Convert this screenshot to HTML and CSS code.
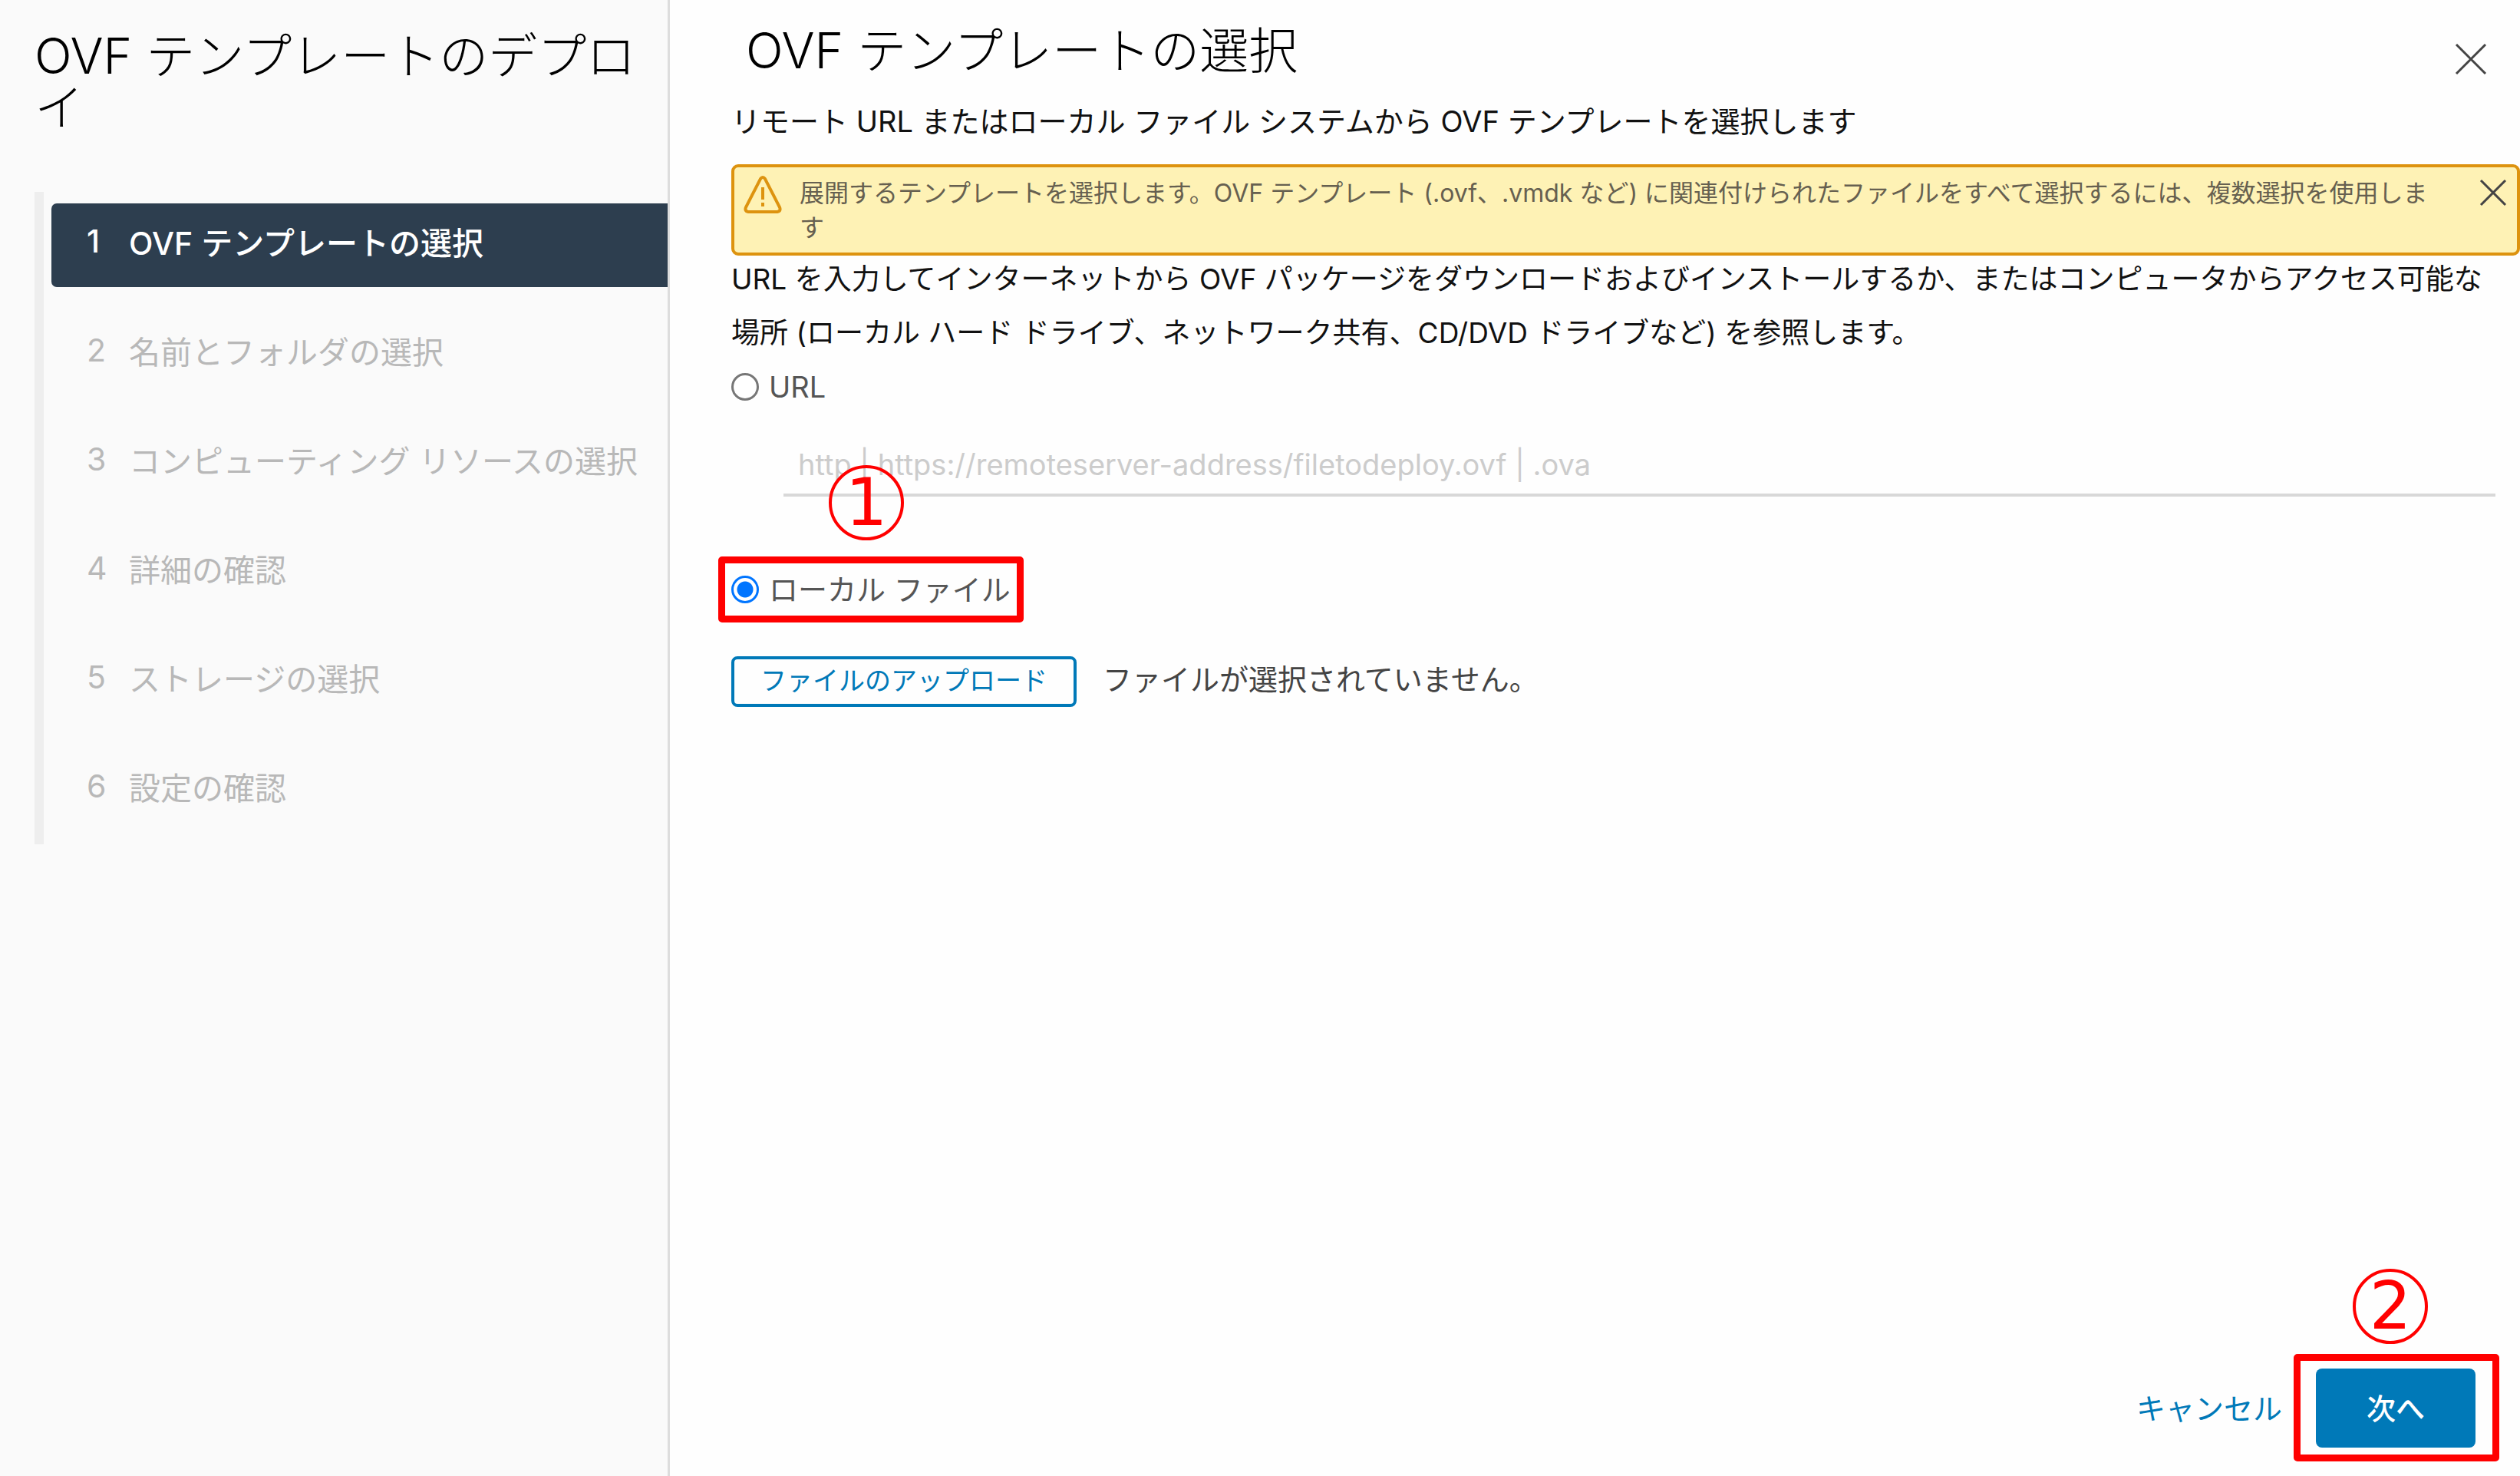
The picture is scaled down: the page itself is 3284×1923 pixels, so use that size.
FILE: index.html
```html
<!DOCTYPE html>
<html lang="ja">
<head>
  <meta charset="UTF-8">
  <title>OVF テンプレートのデプロイ</title>
  <link rel="stylesheet" href="styles.css">
</head>
<body>

  <aside class="sidebar">
    <h1>OVF テンプレートのデプロイ</h1>
    <nav>
      <ol class="steps">
        <li><button class="step active" aria-current="step"><span class="num">1</span>OVF テンプレートの選択</button></li>
        <li><button class="step" disabled><span class="num">2</span>名前とフォルダの選択</button></li>
        <li><button class="step" disabled><span class="num">3</span>コンピューティング リソースの選択</button></li>
        <li><button class="step" disabled><span class="num">4</span>詳細の確認</button></li>
        <li><button class="step" disabled><span class="num">5</span>ストレージの選択</button></li>
        <li><button class="step" disabled><span class="num">6</span>設定の確認</button></li>
      </ol>
    </nav>
  </aside>

  <main>
    <header>
      <h2>OVF テンプレートの選択</h2>
      <button class="close" aria-label="閉じる">
        <svg width="42" height="42" viewBox="0 0 42 42"><path d="M2 2 L40 40 M40 2 L2 40"/></svg>
      </button>
    </header>

    <p class="subtitle">リモート URL またはローカル ファイル システムから OVF テンプレートを選択します</p>

    <div class="alert" role="alert">
      <svg class="alert-icon" width="50" height="50" viewBox="0 0 50 50">
        <path d="M22 4 Q25 0 28 4 L47 41 Q49 46 44 47 H6 Q1 46 3 41 Z"/>
        <path d="M25 15 V31 M25 35 V40"/>
      </svg>
      <p>展開するテンプレートを選択します。OVF テンプレート (.ovf、.vmdk など) に関連付けられたファイルをすべて選択するには、複数選択を使用します</p>
      <button class="close" aria-label="警告を閉じる">
        <svg width="36" height="36" viewBox="0 0 36 36"><path d="M2 2 L34 34 M34 2 L2 34"/></svg>
      </button>
    </div>

    <p class="desc">URL を入力してインターネットから OVF パッケージをダウンロードおよびインストールするか、またはコンピュータからアクセス可能な場所 (ローカル ハード ドライブ、ネットワーク共有、CD/DVD ドライブなど) を参照します。</p>

    <form>
      <label class="option"><input type="radio" name="source" value="url">URL</label>
      <input class="url" type="text" aria-label="URL" placeholder="http | https://remoteserver-address/filetodeploy.ovf | .ova">

      <label class="option local marked"><input type="radio" name="source" value="local" checked>ローカル ファイル<span class="badge">1</span></label>

      <div class="upload">
        <button type="button" class="btn-outline">ファイルのアップロード</button>
        <span>ファイルが選択されていません。</span>
      </div>
    </form>

    <footer>
      <button class="btn-link">キャンセル</button>
      <div class="next marked">
        <button class="btn-primary">次へ</button>
        <span class="badge">2</span>
      </div>
    </footer>
  </main>

</body>
</html>
```
FILE: styles.css
```css
* {
  box-sizing: border-box;
}

body {
  margin: 0;
  min-height: 100vh;
  display: flex;
  font-family: Inter, "Noto Sans CJK JP", sans-serif;
  font-size: 38px;
  font-weight: 400;
  color: #111;
  background: #fefefe;
}

h1, h2, p, ol {
  margin: 0;
  padding: 0;
}

h1, h2 {
  font-size: 64px;
  font-weight: 300;
  line-height: 67px;
  color: #000;
}

button {
  font: inherit;
  border: none;
  background: none;
  padding: 0;
  cursor: pointer;
}

/* sidebar */
.sidebar {
  flex: 0 0 873px;
  padding: 39px 0 0 45px;
  background: #fafafa;
  border-right: 3px solid #ddd;
}

.sidebar h1 {
  padding-right: 24px;
  margin-bottom: 77px;
}

.steps {
  list-style: none;
  display: flex;
  flex-direction: column;
  gap: 33px;
  padding: 15px 0 16px 10px;
  border-left: 12px solid #eee;
}

.step {
  width: 100%;
  height: 109px;
  padding: 0 0 12px 46px;
  display: flex;
  align-items: center;
  font-size: 41px;
  white-space: nowrap;
  color: #b8b8b8;
}

.step.active {
  font-weight: 500;
  color: #fff;
  background: #2d3e4f;
  border-radius: 7px 0 0 7px;
}

.num {
  flex: 0 0 55px;
  text-align: left;
}

/* content */
main {
  flex: 1;
  min-width: 0;
  display: flex;
  flex-direction: column;
  padding-left: 80px;
}

header {
  height: 130px;
  padding: 0 43px 0 19px;
  display: flex;
  align-items: center;
  justify-content: space-between;
}

header .close {
  align-self: flex-end;
  padding-bottom: 32px;
}

.close svg {
  display: block;
  fill: none;
  stroke: #444;
  stroke-width: 3;
}

.subtitle {
  line-height: 56px;
  margin-bottom: 28px;
}

.alert {
  display: flex;
  align-items: flex-start;
  padding: 11px 13px 10px 12px;
  background: #fef2b5;
  border: 4px solid #dd930f;
  border-radius: 9px;
}

.alert-icon {
  flex: none;
  fill: none;
  stroke: #dd930f;
  stroke-width: 4;
}

.alert p {
  flex: 1;
  padding: 0 60px 0 23px;
  font-size: 32px;
  line-height: 45px;
  color: #666050;
}

.alert .close {
  padding-top: 4px;
}

.desc {
  padding-right: 16px;
  margin: -4px 0 4px;
  font-size: 37px;
  line-height: 70px;
}

.option {
  display: flex;
  align-items: center;
  gap: 13px;
  width: max-content;
  line-height: 62px;
  color: #555;
}

.option input {
  appearance: none;
  width: 36px;
  height: 36px;
  margin: 0;
  border: 3px solid #777;
  border-radius: 50%;
  background: #fff;
}

.option input:checked {
  border-color: #0075ff;
  background: radial-gradient(circle, #0075ff 10px, #fff 11px);
}

.url {
  display: block;
  width: calc(100% - 100px);
  height: 80px;
  margin: 32px 32px 95px 68px;
  padding: 0 19px;
  font: inherit;
  background: none;
  border: none;
  border-bottom: 4px solid #d8d8d8;
}

.url::placeholder {
  color: #ccc;
  opacity: 1;
}

.local {
  line-height: 52px;
  margin-bottom: 61px;
}

.upload {
  display: flex;
  align-items: flex-start;
  gap: 34px;
  line-height: 60px;
  color: #444;
}

.btn-outline {
  height: 66px;
  padding: 0 34px 2px;
  font-size: 34px;
  line-height: 56px;
  color: #0079b8;
  border: 4px solid #0079b8;
  border-radius: 8px;
}

footer {
  margin-top: auto;
  padding: 0 58px 37px 0;
  display: flex;
  justify-content: flex-end;
  align-items: center;
  gap: 44px;
}

.btn-link {
  padding-bottom: 4px;
  color: #0079b8;
}

.btn-primary {
  display: block;
  width: 208px;
  height: 103px;
  padding-bottom: 4px;
  color: #fff;
  font-weight: 500;
  background: #0079b8;
  border-radius: 8px;
}

/* red numbered marks over the controls */
.marked {
  position: relative;
}

.marked::after {
  content: "";
  position: absolute;
  inset: -17px;
  border: 9px solid #f00;
  border-radius: 5px;
  pointer-events: none;
}

.next::after {
  inset: -19px -31px -18px -29px;
}

.badge {
  position: absolute;
  left: 127px;
  bottom: 90px;
  width: 98px;
  height: 98px;
  border: 4px solid #f00;
  border-radius: 50%;
  font-family: "DejaVu Sans", sans-serif;
  font-size: 86px;
  font-weight: 400;
  line-height: 88px;
  text-align: center;
  color: #f00;
}

.next .badge {
  left: 48px;
  bottom: 135px;
}
```
